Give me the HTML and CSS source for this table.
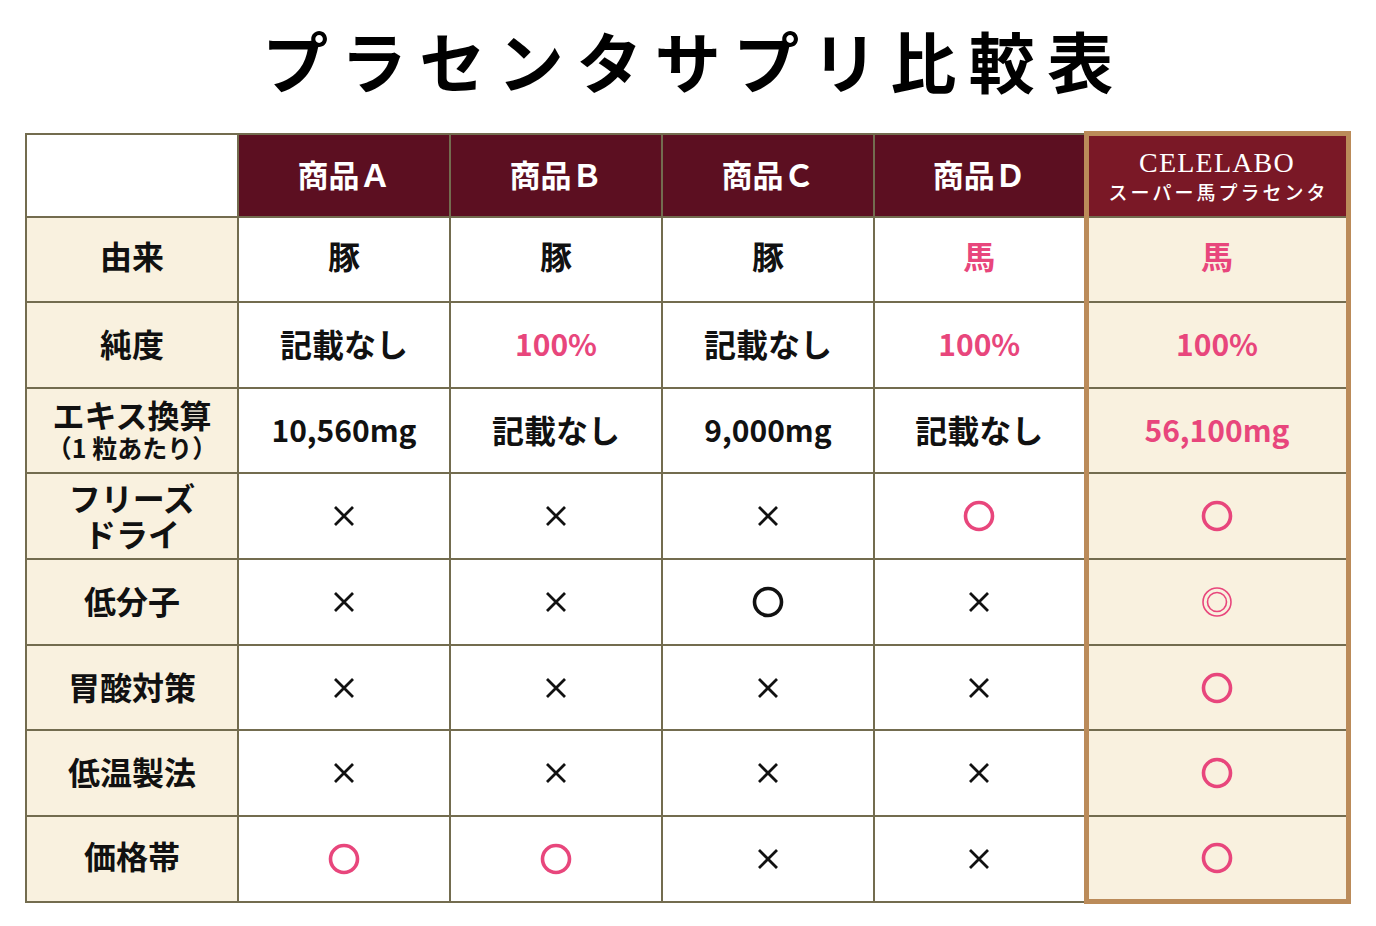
FILE: index.html
```html
<!DOCTYPE html>
<html lang="ja">
<head>
<meta charset="utf-8">
<title>プラセンタサプリ比較表</title>
<link rel="stylesheet" href="styles.css">
</head>
<body>
<main class="page">
  <h1 class="title">プラセンタサプリ比較表</h1>
  <table class="cmp">
    <colgroup>
      <col class="c-label"><col class="c-prod"><col class="c-prod"><col class="c-prod"><col class="c-prod"><col class="c-best">
    </colgroup>
    <thead>
      <tr class="head">
        <th class="blank"></th>
        <th class="prod">商品Ａ</th>
        <th class="prod">商品Ｂ</th>
        <th class="prod">商品Ｃ</th>
        <th class="prod">商品Ｄ</th>
        <th class="best best-top">
          <span class="brand">CELELABO</span>
          <span class="brand-sub">スーパー馬プラセンタ</span>
        </th>
      </tr>
    </thead>
    <tbody>
      <tr class="r1">
        <th class="label">由来</th>
        <td>豚</td><td>豚</td><td>豚</td><td class="pink">馬</td><td class="best pink">馬</td>
      </tr>
      <tr>
        <th class="label">純度</th>
        <td>記載なし</td><td class="pink num">100%</td><td>記載なし</td><td class="pink num">100%</td><td class="best pink num">100%</td>
      </tr>
      <tr>
        <th class="label"><span class="lbl-main">エキス換算</span><span class="lbl-sub">（1 粒あたり）</span></th>
        <td class="num">10,560mg</td><td>記載なし</td><td class="num">9,000mg</td><td>記載なし</td><td class="best pink num">56,100mg</td>
      </tr>
      <tr>
        <th class="label two"><span class="two-line">フリーズ</span><span class="two-line">ドライ</span></th>
        <td><svg class="mx" viewBox="0 0 22 22"><path d="M2 2L20 20M20 2L2 20"/></svg></td>
        <td><svg class="mx" viewBox="0 0 22 22"><path d="M2 2L20 20M20 2L2 20"/></svg></td>
        <td><svg class="mx" viewBox="0 0 22 22"><path d="M2 2L20 20M20 2L2 20"/></svg></td>
        <td><svg class="mo pk" viewBox="0 0 32 32"><circle cx="16" cy="16" r="13.5"/></svg></td>
        <td class="best"><svg class="mo pk" viewBox="0 0 32 32"><circle cx="16" cy="16" r="13.5"/></svg></td>
      </tr>
      <tr>
        <th class="label">低分子</th>
        <td><svg class="mx" viewBox="0 0 22 22"><path d="M2 2L20 20M20 2L2 20"/></svg></td>
        <td><svg class="mx" viewBox="0 0 22 22"><path d="M2 2L20 20M20 2L2 20"/></svg></td>
        <td><svg class="mo bk" viewBox="0 0 32 32"><circle cx="16" cy="16" r="13.5"/></svg></td>
        <td><svg class="mx" viewBox="0 0 22 22"><path d="M2 2L20 20M20 2L2 20"/></svg></td>
        <td class="best"><svg class="mw" viewBox="0 0 32 32"><circle cx="16" cy="16" r="14"/><circle cx="16" cy="16" r="9.5"/></svg></td>
      </tr>
      <tr>
        <th class="label">胃酸対策</th>
        <td><svg class="mx" viewBox="0 0 22 22"><path d="M2 2L20 20M20 2L2 20"/></svg></td>
        <td><svg class="mx" viewBox="0 0 22 22"><path d="M2 2L20 20M20 2L2 20"/></svg></td>
        <td><svg class="mx" viewBox="0 0 22 22"><path d="M2 2L20 20M20 2L2 20"/></svg></td>
        <td><svg class="mx" viewBox="0 0 22 22"><path d="M2 2L20 20M20 2L2 20"/></svg></td>
        <td class="best"><svg class="mo pk" viewBox="0 0 32 32"><circle cx="16" cy="16" r="13.5"/></svg></td>
      </tr>
      <tr>
        <th class="label">低温製法</th>
        <td><svg class="mx" viewBox="0 0 22 22"><path d="M2 2L20 20M20 2L2 20"/></svg></td>
        <td><svg class="mx" viewBox="0 0 22 22"><path d="M2 2L20 20M20 2L2 20"/></svg></td>
        <td><svg class="mx" viewBox="0 0 22 22"><path d="M2 2L20 20M20 2L2 20"/></svg></td>
        <td><svg class="mx" viewBox="0 0 22 22"><path d="M2 2L20 20M20 2L2 20"/></svg></td>
        <td class="best"><svg class="mo pk" viewBox="0 0 32 32"><circle cx="16" cy="16" r="13.5"/></svg></td>
      </tr>
      <tr class="r8">
        <th class="label">価格帯</th>
        <td><svg class="mo pk" viewBox="0 0 32 32"><circle cx="16" cy="16" r="13.5"/></svg></td>
        <td><svg class="mo pk" viewBox="0 0 32 32"><circle cx="16" cy="16" r="13.5"/></svg></td>
        <td><svg class="mx" viewBox="0 0 22 22"><path d="M2 2L20 20M20 2L2 20"/></svg></td>
        <td><svg class="mx" viewBox="0 0 22 22"><path d="M2 2L20 20M20 2L2 20"/></svg></td>
        <td class="best best-bottom"><svg class="mo pk" viewBox="0 0 32 32"><circle cx="16" cy="16" r="13.5"/></svg></td>
      </tr>
    </tbody>
  </table>
</main>
</body>
</html>
```

FILE: styles.css
```css
* { box-sizing: border-box; }

html, body {
  margin: 0;
  padding: 0;
  background: #ffffff;
}

body {
  font-family: "Noto Sans CJK JP", "Noto Sans", sans-serif;
  color: #111111;
}

.page {
  width: 1376px;
  padding-top: 17px;
}

.title {
  margin: 0;
  padding-left: 12px;
  text-align: center;
  font-size: 66px;
  line-height: 84px;
  font-weight: 700;
  letter-spacing: 12.5px;
  color: #000;
}

.cmp {
  margin: 30px 0 0 25px;
  border-collapse: collapse;
  table-layout: fixed;
  width: 1322px;
}

.c-label, .c-prod { width: 212px; }
.c-best { width: 262px; }

.cmp th, .cmp td {
  border: 2px solid #736c4f;
  text-align: center;
  vertical-align: middle;
  padding: 0 0 3px;
  font-size: 32px;
  font-weight: 700;
  line-height: 1.2;
}

.cmp tr { height: 85.65px; }
.cmp tr.head { height: 83px; }

.cmp tr.r1 td, .cmp tr.r1 th,
.cmp tr.r8 th { padding-bottom: 8px; }

.cmp td { background: #ffffff; }

.cmp .num { font-size: 30px; }

.blank { background: #ffffff; }

.cmp .prod {
  background: #5c0f21;
  color: #ffffff;
  font-size: 31px;
  padding-bottom: 2px;
}

.label {
  background: #f9f1df;
  color: #111;
}

.lbl-main {
  display: block;
  font-size: 32px;
  line-height: 35px;
}

.lbl-sub {
  display: block;
  font-size: 25px;
  line-height: 30px;
}

.two-line {
  display: block;
  line-height: 36px;
}

.cmp .pink { color: #e8467c; }

.cmp .best {
  background: #f9f1df;
  border-left: 5px solid #bb8b59;
  border-right: 5px solid #bb8b59;
}

.cmp .best-top {
  background: #7a1826;
  color: #fff;
  border-top: 5px solid #bb8b59;
  padding-bottom: 0;
}

.cmp .best-bottom {
  border-bottom: 5px solid #bb8b59;
}

.brand {
  display: block;
  font-family: "Liberation Serif", "Times New Roman", serif;
  font-weight: 400;
  font-size: 28px;
  letter-spacing: 1.2px;
  line-height: 32px;
}

.brand-sub {
  display: block;
  font-weight: 500;
  font-size: 19px;
  letter-spacing: 3px;
  line-height: 26px;
  padding-left: 3px;
}

.mx {
  display: block;
  margin: 0 auto -3px;
  width: 22px;
  height: 22px;
  fill: none;
  stroke: #111;
  stroke-width: 2.8;
}

.mo {
  display: block;
  margin: 0 auto -3px;
  width: 32px;
  height: 32px;
  fill: none;
  stroke-width: 3.6;
}

.mo.pk { stroke: #e8467c; }
.mo.bk { stroke: #111; }

.mw {
  display: block;
  margin: 0 auto -3px;
  width: 32px;
  height: 32px;
  fill: none;
  stroke: #e8467c;
  stroke-width: 1.6;
}
```
